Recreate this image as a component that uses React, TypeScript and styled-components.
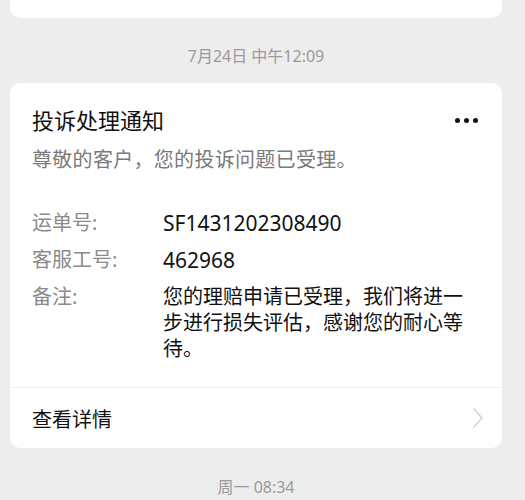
import React from "react";
import styled, { createGlobalStyle } from "styled-components";

const Global = createGlobalStyle`
  html, body { margin: 0; padding: 0; background: #ededed; }
  body { font-family: "Noto Sans", "Noto Sans CJK SC", sans-serif; -webkit-font-smoothing: antialiased; }
`;

const Page = styled.div`
  width: 525px;
  height: 500px;
  box-sizing: border-box;
  padding: 0 23px 0 10px;
  display: flex;
  flex-direction: column;
  overflow: hidden;
`;

const CutCard = styled.div`
  height: 18px;
  background: #fff;
  border-radius: 0 0 10px 10px;
`;

const Stamp = styled.div<{ $top: number; $bottom: number }>`
  text-align: center;
  color: #9a9a9a;
  font-size: 16px;
  line-height: 20px;
  padding: ${(p) => p.$top}px 0 ${(p) => p.$bottom}px;
`;

const Card = styled.div`
  background: #fff;
  border-radius: 10px;
  overflow: hidden;
`;

const Body = styled.div`
  padding: 22px 22px 25px 22px;
`;

const Header = styled.div`
  display: flex;
  align-items: center;
  justify-content: space-between;
`;

const Title = styled.div`
  font-size: 22px;
  line-height: 30px;
  color: #111;
`;

const Dots = styled.div`
  display: flex;
  gap: 4px;
  padding-right: 2px;
`;

const Dot = styled.span`
  width: 5px;
  height: 5px;
  border-radius: 50%;
  background: #111;
`;

const Subtitle = styled.div`
  margin-top: 11px;
  font-size: 20px;
  line-height: 28px;
  color: #7a7a7a;
  letter-spacing: 0.3px;
`;

const Fields = styled.div`
  margin-top: 36px;
  display: grid;
  grid-template-columns: 131px 1fr;
  row-gap: 11px;
  padding-right: 8px;
`;

const Label = styled.div`
  font-size: 20px;
  line-height: 26px;
  color: #8a8a8a;
`;

const Value = styled.div<{ $latin?: boolean }>`
  font-size: ${(p) => (p.$latin ? 21 : 20)}px;
  line-height: 26px;
  color: #111;
`;

const Footer = styled.div`
  border-top: 1px solid #f0f0f0;
  height: 60px;
  display: flex;
  align-items: center;
  justify-content: space-between;
  padding: 0 18px 0 22px;
`;

const FooterText = styled.div`
  font-size: 20px;
  color: #111;
`;

const Chevron = () => (
  <svg width="12" height="22" viewBox="0 0 12 22" fill="none">
    <path d="M1.5 1.5 L10 11 L1.5 20.5" stroke="#d0d0d0" strokeWidth="1.4" />
  </svg>
);

export default function App() {
  return (
    <>
      <Global />
      <Page>
        <CutCard />
        <Stamp $top={28} $bottom={17}>7月24日 中午12:09</Stamp>
        <Card>
          <Body>
            <Header>
              <Title>投诉处理通知</Title>
              <Dots>
                <Dot />
                <Dot />
                <Dot />
              </Dots>
            </Header>
            <Subtitle>尊敬的客户，您的投诉问题已受理。</Subtitle>
            <Fields>
              <Label>运单号:</Label>
              <Value $latin>SF1431202308490</Value>
              <Label>客服工号:</Label>
              <Value $latin>462968</Value>
              <Label>备注:</Label>
              <Value>您的理赔申请已受理，我们将进一步进行损失评估，感谢您的耐心等待。</Value>
            </Fields>
          </Body>
          <Footer>
            <FooterText>查看详情</FooterText>
            <Chevron />
          </Footer>
        </Card>
        <Stamp $top={29} $bottom={0}>周一 08:34</Stamp>
      </Page>
    </>
  );
}
